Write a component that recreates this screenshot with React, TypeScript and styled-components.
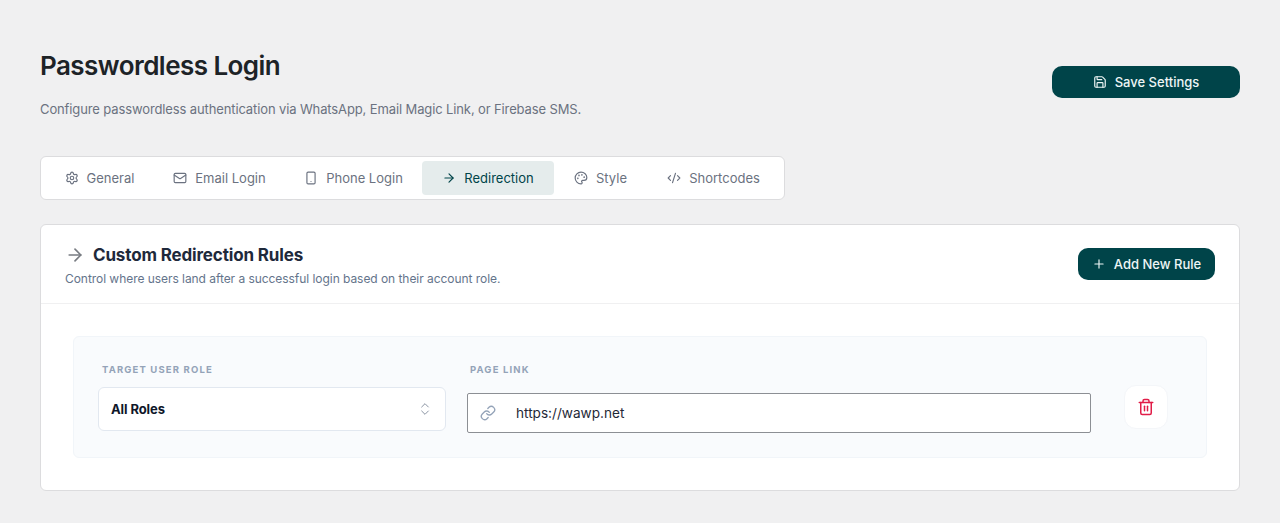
import React from "react";
import styled, { createGlobalStyle } from "styled-components";
import { Settings, Mail, Smartphone, ArrowRight, Palette, CodeXml, Save, Plus, ChevronsUpDown, Link, Trash2 } from "lucide-react";

const Global = createGlobalStyle`
  html, body { margin: 0; padding: 0; background: #f0f0f1; }
  body { font-family: Inter, "Liberation Sans", sans-serif; -webkit-font-smoothing: antialiased; }
  * { box-sizing: border-box; }
`;

const Page = styled.div`
  width: 1280px;
  height: 523px;
  overflow: hidden;
  padding: 48px 40px 0;
`;
const Header = styled.header`
  display: flex;
  justify-content: space-between;
  align-items: flex-start;
  height: 108px;
`;
const Title = styled.h1`
  margin: 1px 0 0;
  font-size: 26px;
  line-height: 34px;
  font-weight: 600;
  letter-spacing: -0.55px;
  color: #1d2327;
`;
const Subtitle = styled.p`
  margin: 17px 0 0;
  font-size: 13px;
  line-height: 18px;
  letter-spacing: -0.12px;
  color: #6b7280;
`;
const PrimaryButton = styled.button<{ $width: number; $gap: number }>`
  display: flex;
  align-items: center;
  justify-content: center;
  gap: ${(p) => p.$gap}px;
  width: ${(p) => p.$width}px;
  height: 32px;
  padding: 0;
  border: 0;
  border-radius: 10px;
  background: #004449;
  color: #eef6f6;
  font-family: inherit;
  font-size: 13px;
  font-weight: 500;
`;
const SaveButton = styled(PrimaryButton)`
  margin-top: 18px;
`;
const Tabs = styled.nav`
  display: inline-flex;
  align-items: center;
  height: 44px;
  padding: 0 4px;
  background: #fff;
  border: 1px solid #dcdcde;
  border-radius: 6px;
`;
const Tab = styled.div<{ $active?: boolean; $width: number }>`
  display: flex;
  align-items: center;
  justify-content: center;
  gap: 8px;
  width: ${(p) => p.$width}px;
  height: 34px;
  border-radius: 4px;
  background: ${(p) => (p.$active ? "#e5ecec" : "transparent")};
  color: ${(p) => (p.$active ? "#004449" : "#6b7280")};
  font-size: 13px;
  font-weight: 400;
  white-space: nowrap;
`;
const Card = styled.section`
  margin-top: 24px;
  height: 267px;
  background: #fff;
  border: 1px solid #dcdcde;
  border-radius: 6px;
`;
const CardHeader = styled.div`
  display: flex;
  justify-content: space-between;
  align-items: center;
  height: 79px;
  padding: 0 24px;
  border-bottom: 1px solid #f0f0f1;
`;
const CardHeading = styled.div`
  padding-top: 2px;
`;
const CardTitleRow = styled.div`
  display: flex;
  align-items: center;
  gap: 8px;
  color: #1e293b;
`;
const CardTitle = styled.h2`
  margin: 0;
  font-size: 17px;
  line-height: 24px;
  font-weight: 700;
  letter-spacing: -0.15px;
  color: #1e293b;
`;
const CardText = styled.p`
  margin: 4px 0 0;
  font-size: 12px;
  line-height: 16px;
  letter-spacing: -0.05px;
  color: #64748b;
`;
const RuleBox = styled.div`
  display: flex;
  align-items: flex-start;
  margin: 32px 32px 0;
  height: 122px;
  padding: 24px 38px 0 24px;
  background: #f9fbfd;
  border: 1px solid #f1f5f9;
  border-radius: 6px;
`;
const Field = styled.div<{ $width: number }>`
  width: ${(p) => p.$width}px;
  margin-right: 21px;
`;
const FieldLabel = styled.div<{ $indent: number; $gap: number }>`
  margin: 1px 0 ${(p) => p.$gap}px ${(p) => p.$indent}px;
  font-size: 9.5px;
  line-height: 16px;
  font-weight: 700;
  letter-spacing: 1.15px;
  text-transform: uppercase;
  color: #94a3b8;
`;
const Select = styled.div`
  display: flex;
  align-items: center;
  justify-content: space-between;
  height: 44px;
  padding: 0 12px;
  background: #fff;
  border: 1px solid #e2e8f0;
  border-radius: 6px;
  color: #0f172a;
  font-size: 13px;
  line-height: 42px;
  font-weight: 700;
  letter-spacing: -0.1px;
`;
const InputBox = styled.div`
  display: flex;
  align-items: center;
  gap: 20px;
  height: 40px;
  padding: 0 12px;
  background: #fff;
  border: 1px solid #8c8f94;
  border-radius: 2px;
  font-size: 13.6px;
  color: #1f2937;
`;
const DeleteButton = styled.button`
  display: flex;
  align-items: center;
  justify-content: center;
  width: 44px;
  height: 44px;
  margin: 24px 0 0 12px;
  padding: 0;
  background: #fff;
  border: 1px solid #f4f6f9;
  border-radius: 12px;
  color: #e11d48;
`;

const tabs = [
  { label: "General", Icon: Settings, width: 109 },
  { label: "Email Login", Icon: Mail, width: 131 },
  { label: "Phone Login", Icon: Smartphone, width: 137 },
  { label: "Redirection", Icon: ArrowRight, width: 132, active: true },
  { label: "Style", Icon: Palette, width: 93 },
  { label: "Shortcodes", Icon: CodeXml, width: 133 },
];

export default function App() {
  return (
    <Page>
      <Global />
      <Header>
        <div>
          <Title>Passwordless Login</Title>
          <Subtitle>Configure passwordless authentication via WhatsApp, Email Magic Link, or Firebase SMS.</Subtitle>
        </div>
        <SaveButton $width={188} $gap={8}>
          <Save size={14} />
          Save Settings
        </SaveButton>
      </Header>
      <Tabs>
        {tabs.map(({ label, Icon, width, active }) => (
          <Tab key={label} $active={active} $width={width}>
            <Icon size={14} />
            {label}
          </Tab>
        ))}
      </Tabs>
      <Card>
        <CardHeader>
          <CardHeading>
            <CardTitleRow>
              <ArrowRight size={20} color="#787c82" />
              <CardTitle>Custom Redirection Rules</CardTitle>
            </CardTitleRow>
            <CardText>Control where users land after a successful login based on their account role.</CardText>
          </CardHeading>
          <PrimaryButton $width={137} $gap={8}>
            <Plus size={14} />
            Add New Rule
          </PrimaryButton>
        </CardHeader>
        <RuleBox>
          <Field $width={348}>
            <FieldLabel $indent={4} $gap={9}>Target User Role</FieldLabel>
            <Select>
              All Roles
              <ChevronsUpDown size={16} strokeWidth={1.5} color="#8a94a3" />
            </Select>
          </Field>
          <Field $width={624}>
            <FieldLabel $indent={3} $gap={15}>Page Link</FieldLabel>
            <InputBox>
              <Link size={16} color="#94a3b8" />
              https://wawp.net
            </InputBox>
          </Field>
          <DeleteButton>
            <Trash2 size={18} />
          </DeleteButton>
        </RuleBox>
      </Card>
    </Page>
  );
}
